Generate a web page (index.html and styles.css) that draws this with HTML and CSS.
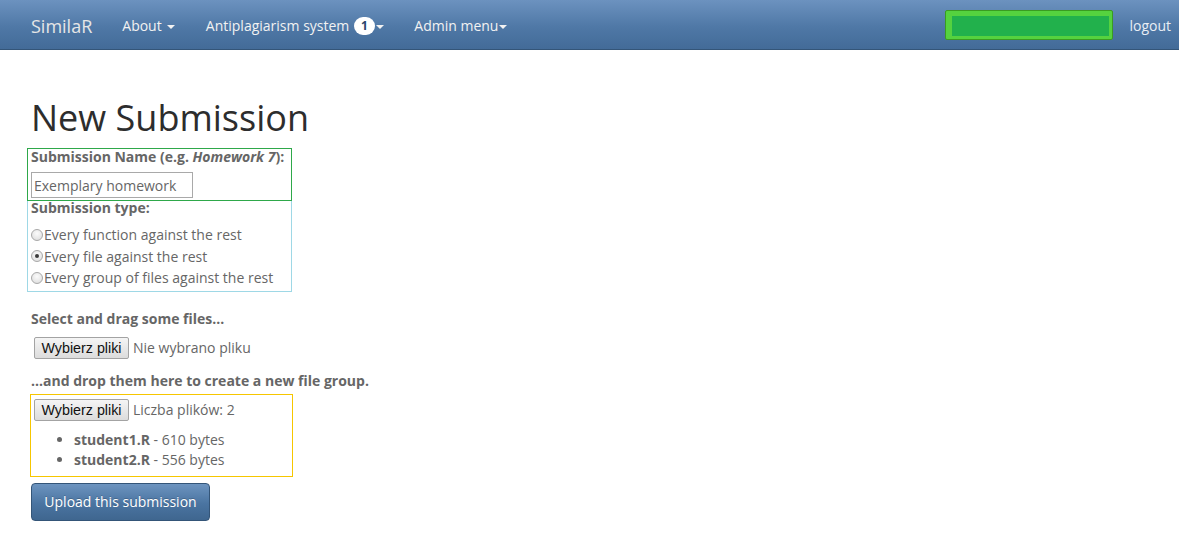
FILE: index.html
```html
<!DOCTYPE html>
<html lang="en">
<head>
<meta charset="utf-8">
<title>SimilaR - New Submission</title>
<link rel="stylesheet" href="styles.css">
</head>
<body>
<nav class="navbar">
  <a class="brand" href="#">SimilaR</a>
  <ul class="nav">
    <li><a href="#">About <span class="caret"></span></a></li>
    <li><a href="#">Antiplagiarism system <span class="badge">1</span><span class="caret caret-tight"></span></a></li>
    <li><a href="#">Admin menu<span class="caret caret-tight"></span></a></li>
  </ul>
  <div class="nav-right">
    <div class="redact"><div class="redact-inner"></div></div>
    <a class="logout" href="#">logout</a>
  </div>
</nav>

<main class="content">
  <h1 class="title">New Submission</h1>

  <div class="box box-green">
    <div class="label">Submission Name (e.g. <em>Homework 7</em>):</div>
    <input class="text-input" type="text" value="Exemplary homework">
  </div>

  <div class="box box-cyan">
    <div class="label label-tight">Submission type:</div>
    <div class="radio-row"><span class="radio"></span>Every function against the rest</div>
    <div class="radio-row"><span class="radio checked"></span>Every file against the rest</div>
    <div class="radio-row"><span class="radio"></span>Every group of files against the rest</div>
  </div>

  <div class="label section-label">Select and drag some files...</div>
  <div class="file-row">
    <button class="file-btn" type="button">Wybierz pliki</button>
    <span class="file-status">Nie wybrano pliku</span>
  </div>

  <div class="label section-label2">...and drop them here to create a new file group.</div>
  <div class="box-yellow">
    <div class="file-row file-row-inner">
      <button class="file-btn" type="button">Wybierz pliki</button>
      <span class="file-status">Liczba plików: 2</span>
    </div>
    <ul class="file-list">
      <li><strong>student1.R</strong> - 610 bytes</li>
      <li><strong>student2.R</strong> - 556 bytes</li>
    </ul>
  </div>

  <button class="btn-primary" type="button">Upload this submission</button>
</main>
</body>
</html>
```

FILE: styles.css
```css
* { box-sizing: border-box; }

html, body {
  margin: 0;
  padding: 0;
  background: #fff;
}

body {
  font-family: "Open Sans", "DejaVu Sans", sans-serif;
  font-size: 14px;
  line-height: 20px;
  color: #666;
}

/* ---------- navbar ---------- */
.navbar {
  display: flex;
  align-items: center;
  height: 50px;
  padding-left: 16px;
  background: linear-gradient(to bottom, #6c92bf 0%, #4f78a6 55%, #436b98 100%);
  border-bottom: 1px solid #345578;
}

.brand {
  display: block;
  padding: 16px 15px 14px;
  font-size: 18px;
  line-height: 20px;
  color: #e6e6e6;
  text-decoration: none;
}

.nav {
  display: flex;
  list-style: none;
  margin: 0;
  padding: 0;
}

.nav a {
  display: block;
  padding: 16px 15px 14px;
  line-height: 20px;
  color: #f2f2f2;
  text-decoration: none;
}

.nav li + li a { padding-left: 15.5px; }

.caret {
  display: inline-block;
  width: 0;
  height: 0;
  margin-left: 2px;
  vertical-align: middle;
  border-top: 4px solid #f2f2f2;
  border-left: 4px solid transparent;
  border-right: 4px solid transparent;
}

.caret-tight { margin-left: 1px; }

.badge {
  display: inline-block;
  min-width: 10px;
  margin-left: 1px;
  padding: 3px 7px;
  font-size: 12px;
  font-weight: 700;
  line-height: 1;
  color: #28466d;
  background: #fff;
  border-radius: 10px;
  vertical-align: 1px;
  text-align: center;
}

.nav-right {
  display: flex;
  align-items: center;
  margin-left: auto;
}

.redact {
  width: 168px;
  height: 30px;
  padding: 5px 3px 3px 6px;
  background: #55d23f;
  border: 1px solid #3a9b22;
  border-radius: 2px;
}

.redact-inner {
  height: 100%;
  background: #22b14c;
}

.logout {
  display: block;
  padding: 16px 8px 14px 16px;
  line-height: 20px;
  color: #e9eef5;
  text-decoration: none;
  font-size: 14px;
}

/* ---------- content ---------- */
.content {
  padding-left: 31px;
}

.title {
  margin: 48px 0 10px;
  font-size: 36px;
  line-height: 40px;
  font-weight: 400;
  color: #2d2d2d;
}

.label {
  font-weight: 700;
}

.label em { font-style: italic; }

.box {
  width: 265px;
  margin-left: -4px;
  padding-left: 3px;
}

.box-green {
  border: 1px solid #2ea84a;
  padding-bottom: 2px;
}

.box-green .label {
  line-height: 16px;
  margin-bottom: 7px;
}

.text-input {
  display: block;
  width: 162px;
  height: 26px;
  margin: 0;
  padding: 0 2px;
  border: 1px solid #a9a9a9;
  font-family: "Open Sans", "DejaVu Sans", sans-serif;
  font-size: 14px;
  color: #666;
  background: #fff;
}

.box-cyan {
  border: 1px solid #9ed8e6;
  border-top: none;
  padding-bottom: 2px;
}

.label-tight {
  line-height: 14px;
  margin-bottom: 9px;
}

.radio-row {
  display: flex;
  align-items: center;
  height: 21.5px;
  line-height: 21.5px;
}

.radio {
  display: inline-block;
  width: 12px;
  height: 12px;
  margin-right: 1px;
  border-radius: 50%;
  border: 1px solid #a8a8a8;
  background: radial-gradient(circle at 50% 35%, #fbfbfb 0%, #e4e4e4 70%, #d6d6d6 100%);
  position: relative;
  flex: none;
}

.radio.checked::after {
  content: "";
  position: absolute;
  left: 3px;
  top: 3px;
  width: 4px;
  height: 4px;
  border-radius: 50%;
  background: #3a3a3a;
}

.section-label {
  margin-top: 17px;
}

.file-row {
  display: flex;
  align-items: center;
  gap: 4px;
  margin-top: 8px;
  padding-left: 3px;
  height: 22px;
}

.file-btn {
  width: 95px;
  height: 22px;
  margin: 0;
  padding: 0;
  font-family: "Liberation Sans", Arial, sans-serif;
  font-size: 14.3px;
  color: #111;
  background: linear-gradient(to bottom, #f5f5f5 0%, #e6e6e6 60%, #dcdcdc 100%);
  border: 1px solid #a3a3a3;
  border-radius: 2px;
}

.file-status {
  color: #666;
}

.section-label2 {
  margin-top: 12px;
}

.box-yellow {
  width: 263px;
  margin-top: 3px;
  margin-left: -1px;
  padding: 4px 0 6px 3px;
  border: 1px solid #f6c600;
}

.file-row-inner {
  margin-top: 0;
  padding-left: 0;
}

.file-list {
  margin: 9px 0 0;
  padding-left: 40px;
}

.file-list li {
  line-height: 20px;
}

.file-list strong { font-weight: 700; }

.btn-primary {
  display: block;
  width: 179px;
  height: 38px;
  margin-top: 6px;
  padding: 0 12px;
  font-family: "Open Sans", "DejaVu Sans", sans-serif;
  font-size: 14px;
  color: #fff;
  text-shadow: 0 -1px 0 rgba(0, 0, 0, 0.2);
  background: linear-gradient(to bottom, #6d94bf 0%, #4a74a1 55%, #3f668f 100%);
  border: 1px solid #345578;
  border-radius: 4px;
}
```
